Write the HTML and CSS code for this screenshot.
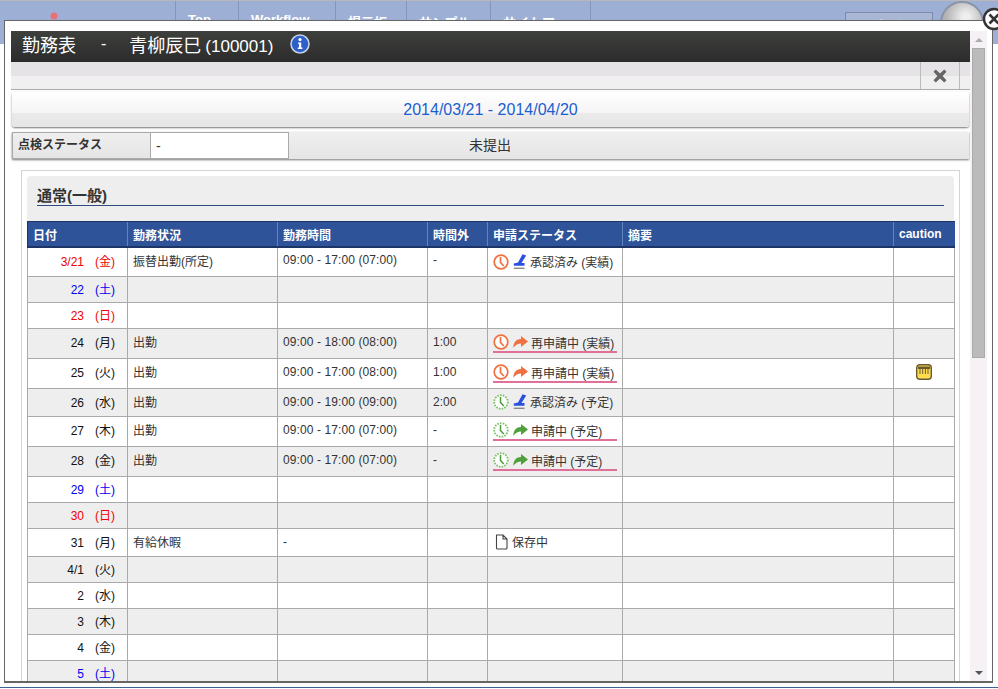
FILE: index.html
```html
<!DOCTYPE html>
<html lang="ja">

<head>
    <meta charset="UTF-8">
    <title>勤務表</title>
    <link rel="stylesheet" href="styles.css">
</head>

<body>
    <svg class="defs" width="0" height="0">
        <symbol id="clock-red" viewBox="0 0 16 16">
            <circle cx="8" cy="8" r="6.8" fill="#fff" stroke="#ef7040" stroke-width="1.7" />
            <path d="M7.5 3V8.5L10.8 12" fill="none" stroke="#ef7040" stroke-width="1.7" />
        </symbol>
        <symbol id="clock-green" viewBox="0 0 16 16">
            <circle cx="8" cy="8" r="6.8" fill="#fff" stroke="#7cc265" stroke-width="1.8" stroke-dasharray="1.6 1.2" />
            <path d="M7.5 3V8.5L10.8 12" fill="none" stroke="#4d9a3a" stroke-width="1.5" />
        </symbol>
        <symbol id="stamp" viewBox="0 0 14 16">
            <path d="M9.5 0.3L13.2 1.6L8.5 9H11.5V11.8H0.8V9.5L5 8.5Z" fill="#2a50e0" />
            <path d="M0.8 13.6H11.5V15H0.8Z" fill="#888" />
        </symbol>
        <symbol id="arrow" viewBox="0 0 15 12">
            <path d="M0.3 11.7C0.5 6 3.5 3 8 3V0L15 5.5L8 11V7.5C5 7.5 2.8 8.8 0.3 11.7Z" fill="currentColor" />
        </symbol>
        <symbol id="doc" viewBox="0 0 13 16">
            <path d="M1.5 1H8L12 5V14C12 14.6 11.6 15 11 15H2.5C1.9 15 1.5 14.6 1.5 14ZM8 1V5H12" fill="#fff" stroke="#444" stroke-width="1.1" />
        </symbol>
    </svg>

    <header class="site-header">
        <div class="logo">
            <svg width="110" height="36" viewBox="0 0 110 36">
                <circle cx="14" cy="8" r="3.5" fill="#e8707a" />
                <path d="M2 20C6 12 16 12 20 18" fill="none" stroke="#e8707a" stroke-width="4" />
                <circle cx="100" cy="15" r="2.5" fill="#b8bed0" />
            </svg>
        </div>
        <nav class="site-nav">
            <a>Top</a>
            <a>Workflow</a>
            <a>掲示板</a>
            <a>サンプル</a>
            <a>サイトマップ</a>
        </nav>
        <div class="logout">ログアウト</div>
        <div class="avatar"></div>
    </header>

    <div class="backdrop-line"></div>

    <div class="modal">
        <div class="modal-main">
            <div class="title-bar">
                <span class="title-text">勤務表</span>
                <span class="title-dash">-</span>
                <span class="title-text">青柳辰巳<span class="title-id">(100001)</span></span>
                <svg class="info-icon" width="20" height="20" viewBox="0 0 20 20">
                    <circle cx="10" cy="10" r="9" fill="#2d5fc8" stroke="#c4cfe4" stroke-width="1.6" />
                    <circle cx="10" cy="5.6" r="1.6" fill="#fff" />
                    <path d="M8 8.4H11.2V13.6H12.4V15H7.8V13.6H9V9.8H8Z" fill="#fff" />
                </svg>
            </div>
            <div class="toolbar">
                <div class="toolbar-close">
                    <svg width="14" height="14" viewBox="0 0 14 14">
                        <path d="M2.8 0.5L7 4.4L11.2 0.5L13.5 2.8L9.6 7L13.5 11.2L11.2 13.5L7 9.6L2.8 13.5L0.5 11.2L4.4 7L0.5 2.8Z" fill="#666" />
                    </svg>
                </div>
            </div>
            <div class="date-bar">2014/03/21 - 2014/04/20</div>
            <div class="status-bar">
                <div class="status-label">点検ステータス</div>
                <div class="status-value">-</div>
                <div class="status-state">未提出</div>
            </div>
            <div class="panel">
                <div class="section-head">
                    <h2>通常(一般)</h2>
                </div>
                <table class="sheet">
                    <colgroup>
                        <col class="c-date">
                        <col class="c-work">
                        <col class="c-time">
                        <col class="c-over">
                        <col class="c-apply">
                        <col class="c-note">
                        <col class="c-caution">
                    </colgroup>
                    <thead>
                        <tr>
                            <th>日付</th>
                            <th>勤務状況</th>
                            <th>勤務時間</th>
                            <th>時間外</th>
                            <th>申請ステータス</th>
                            <th>摘要</th>
                            <th>caution</th>
                        </tr>
                    </thead>
                    <tbody>
                        <tr class="h29">
                            <td class="day red"><span class="num">3/21</span><span>(金)</span></td>
                            <td>振替出勤(所定)</td>
                            <td class="time">09:00 - 17:00 (07:00)</td>
                            <td>-</td>
                            <td><span class="apply"><svg class="i-clock"><use href="#clock-red" /></svg><svg class="i-stamp"><use href="#stamp" /></svg>承認済み (実績)</span></td>
                            <td></td>
                            <td></td>
                        </tr>
                        <tr class="h26 alt">
                            <td class="day blue"><span class="num">22</span><span>(土)</span></td>
                            <td></td>
                            <td></td>
                            <td></td>
                            <td></td>
                            <td></td>
                            <td></td>
                        </tr>
                        <tr class="h26">
                            <td class="day red"><span class="num">23</span><span>(日)</span></td>
                            <td></td>
                            <td></td>
                            <td></td>
                            <td></td>
                            <td></td>
                            <td></td>
                        </tr>
                        <tr class="h30 alt">
                            <td class="day"><span class="num">24</span><span>(月)</span></td>
                            <td>出勤</td>
                            <td class="time">09:00 - 18:00 (08:00)</td>
                            <td>1:00</td>
                            <td><span class="apply pending"><svg class="i-clock"><use href="#clock-red" /></svg><svg class="i-arrow orange"><use href="#arrow" /></svg>再申請中 (実績)</span></td>
                            <td></td>
                            <td></td>
                        </tr>
                        <tr class="h30">
                            <td class="day"><span class="num">25</span><span>(火)</span></td>
                            <td>出勤</td>
                            <td class="time">09:00 - 17:00 (08:00)</td>
                            <td>1:00</td>
                            <td><span class="apply pending"><svg class="i-clock"><use href="#clock-red" /></svg><svg class="i-arrow orange"><use href="#arrow" /></svg>再申請中 (実績)</span></td>
                            <td></td>
                            <td class="caution-cell">
                                <svg width="16" height="16" viewBox="0 0 16 16">
                                    <rect x="0.7" y="0.7" width="14.6" height="14.6" rx="3" fill="#ffdc50" stroke="#6a5a30" stroke-width="1.4" />
                                    <path d="M2 2.5H14V5H2Z" fill="#6a5a30" />
                                    <path d="M4 5V10M6.7 5V10M9.4 5V10M12 5V10" stroke="#6a5a30" stroke-width="1" />
                                </svg>
                            </td>
                        </tr>
                        <tr class="h28 alt">
                            <td class="day"><span class="num">26</span><span>(水)</span></td>
                            <td>出勤</td>
                            <td class="time">09:00 - 19:00 (09:00)</td>
                            <td>2:00</td>
                            <td><span class="apply"><svg class="i-clock"><use href="#clock-green" /></svg><svg class="i-stamp"><use href="#stamp" /></svg>承認済み (予定)</span></td>
                            <td></td>
                            <td></td>
                        </tr>
                        <tr class="h30">
                            <td class="day"><span class="num">27</span><span>(木)</span></td>
                            <td>出勤</td>
                            <td class="time">09:00 - 17:00 (07:00)</td>
                            <td>-</td>
                            <td><span class="apply pending"><svg class="i-clock"><use href="#clock-green" /></svg><svg class="i-arrow green"><use href="#arrow" /></svg>申請中 (予定)</span></td>
                            <td></td>
                            <td></td>
                        </tr>
                        <tr class="h30 alt">
                            <td class="day"><span class="num">28</span><span>(金)</span></td>
                            <td>出勤</td>
                            <td class="time">09:00 - 17:00 (07:00)</td>
                            <td>-</td>
                            <td><span class="apply pending"><svg class="i-clock"><use href="#clock-green" /></svg><svg class="i-arrow green"><use href="#arrow" /></svg>申請中 (予定)</span></td>
                            <td></td>
                            <td></td>
                        </tr>
                        <tr class="h26">
                            <td class="day blue"><span class="num">29</span><span>(土)</span></td>
                            <td></td>
                            <td></td>
                            <td></td>
                            <td></td>
                            <td></td>
                            <td></td>
                        </tr>
                        <tr class="h26 alt">
                            <td class="day red"><span class="num">30</span><span>(日)</span></td>
                            <td></td>
                            <td></td>
                            <td></td>
                            <td></td>
                            <td></td>
                            <td></td>
                        </tr>
                        <tr class="h28">
                            <td class="day"><span class="num">31</span><span>(月)</span></td>
                            <td>有給休暇</td>
                            <td>-</td>
                            <td></td>
                            <td><span class="apply"><svg class="i-doc"><use href="#doc" /></svg>保存中</span></td>
                            <td></td>
                            <td></td>
                        </tr>
                        <tr class="h26 alt">
                            <td class="day"><span class="num">4/1</span><span>(火)</span></td>
                            <td></td>
                            <td></td>
                            <td></td>
                            <td></td>
                            <td></td>
                            <td></td>
                        </tr>
                        <tr class="h26">
                            <td class="day"><span class="num">2</span><span>(水)</span></td>
                            <td></td>
                            <td></td>
                            <td></td>
                            <td></td>
                            <td></td>
                            <td></td>
                        </tr>
                        <tr class="h26 alt">
                            <td class="day"><span class="num">3</span><span>(木)</span></td>
                            <td></td>
                            <td></td>
                            <td></td>
                            <td></td>
                            <td></td>
                            <td></td>
                        </tr>
                        <tr class="h26">
                            <td class="day"><span class="num">4</span><span>(金)</span></td>
                            <td></td>
                            <td></td>
                            <td></td>
                            <td></td>
                            <td></td>
                            <td></td>
                        </tr>
                        <tr class="h26 alt">
                            <td class="day blue"><span class="num">5</span><span>(土)</span></td>
                            <td></td>
                            <td></td>
                            <td></td>
                            <td></td>
                            <td></td>
                            <td></td>
                        </tr>
                    </tbody>
                </table>
            </div>
        </div>
        <div class="scrollbar">
            <span class="arrow-up"></span>
            <div class="thumb"></div>
            <span class="arrow-down"></span>
        </div>
    </div>

    <svg class="modal-close" width="24" height="24" viewBox="0 0 24 24">
        <circle cx="12" cy="12" r="10" fill="#fff" stroke="#333" stroke-width="2.4" />
        <path d="M7.5 7.5L16.5 16.5M16.5 7.5L7.5 16.5" stroke="#333" stroke-width="2.6" />
    </svg>
</body>

</html>
```

FILE: styles.css
```css
html,
body {
    margin: 0;
    padding: 0;
    height: 689px;
    overflow: hidden;
}

body {
    position: relative;
    background: #fff;
    font-family: "Liberation Sans", "Noto Sans CJK JP", sans-serif;
    font-size: 12px;
    color: #333;
}

.defs {
    position: absolute;
}

/* page behind the dialog */
.site-header {
    display: flex;
    height: 44px;
    box-sizing: border-box;
    border-top: 1px solid #b8b8b8;
    background: #9eafd5;
    position: relative;
}

.logo {
    width: 175px;
    padding: 7px 0 0 40px;
    box-sizing: border-box;
}

.site-nav {
    display: flex;
    height: 44px;
    border-left: 1px solid #8494bb;
}

.site-nav a {
    display: block;
    padding: 11px 12px 0;
    border-right: 1px solid #8494bb;
    color: #fff;
    font-size: 13px;
    font-weight: bold;
}

.site-nav a:nth-child(1) {
    width: 38px;
}

.site-nav a:nth-child(2) {
    width: 72px;
}

.site-nav a:nth-child(3) {
    width: 46px;
}

.site-nav a:nth-child(4) {
    width: 59px;
}

.site-nav a:nth-child(5) {
    width: 75px;
}

.logout {
    width: 86px;
    height: 24px;
    margin: 11px 0 0 254px;
    border: 1px solid #7f8aa8;
    background: #a9b6d4;
    color: #fff;
    text-align: center;
    line-height: 26px;
}

.avatar {
    width: 44px;
    height: 44px;
    margin: 0 0 0 7px;
    border-radius: 50%;
    background: radial-gradient(circle at 60% 35%, #eee 10%, #b5b5b5 55%, #999);
    border: 2px solid #8a93a8;
    box-sizing: border-box;
}

.backdrop-line {
    position: absolute;
    left: 0;
    top: 687px;
    width: 100%;
    height: 1px;
    background: #3b6290;
}

/* dialog */
.modal {
    position: absolute;
    left: 4px;
    top: 20px;
    width: 989px;
    height: 663px;
    box-sizing: border-box;
    display: flex;
    padding: 10px 5px 0 6px;
    background: #fff;
    border: 1px solid #666;
    border-bottom-width: 2px;
    overflow: hidden;
}

.modal-main {
    width: 959px;
    flex: none;
}

.modal-close {
    position: absolute;
    left: 982px;
    top: 7px;
}

.title-bar {
    display: flex;
    align-items: center;
    height: 31px;
    box-sizing: border-box;
    padding: 0 0 6px 11px;
    background: linear-gradient(#3e403d, #2b2b2b);
    color: #fff;
    font-size: 18px;
}

.title-id {
    margin-left: 4px;
    font-size: 17px;
}

.title-dash {
    margin: 0 23px 0 25px;
    font-size: 16px;
}

.info-icon {
    margin-left: 17px;
}

.toolbar {
    display: flex;
    justify-content: flex-end;
    height: 28px;
    box-sizing: border-box;
    padding-right: 10px;
    background: linear-gradient(#e5e3e5 50%, #f1f0f1 50%);
    border-bottom: 1px solid #aaa;
}

.toolbar-close {
    display: flex;
    align-items: center;
    justify-content: center;
    width: 38px;
    border: 1px solid #bbb;
    border-width: 0 1px;
}

.date-bar {
    height: 35px;
    margin: 2px 1px 0;
    border-radius: 3px;
    background: linear-gradient(#fff, #f6f4f6 60%, #ebeaeb 60%, #e6e6e6);
    box-shadow: 0 1px 2px #777;
    color: #1a5fd0;
    font-size: 16px;
    line-height: 35px;
    text-align: center;
}

.status-bar {
    display: flex;
    height: 27px;
    margin: 5px 1px 0;
    background: linear-gradient(#f0eff0, #e6e5e6);
    box-shadow: 0 1px 2px #777;
}

.status-label {
    width: 138px;
    box-sizing: border-box;
    padding-left: 5px;
    border: 1px solid #aaa;
    border-right: 0;
    font-weight: bold;
    line-height: 24px;
}

.status-value {
    width: 139px;
    box-sizing: border-box;
    padding-left: 5px;
    border: 1px solid #aaa;
    background: #fff;
    font-size: 14px;
    line-height: 26px;
}

.status-state {
    width: 402px;
    text-align: center;
    font-size: 14px;
    line-height: 26px;
}

.panel {
    margin: 11px 0 0 10px;
    padding: 5px 5px 0 5px;
    width: 927px;
    height: 520px;
    border: 1px solid #d4d4d4;
    border-bottom: 0;
    overflow: hidden;
}

.section-head {
    height: 45px;
    box-sizing: border-box;
    padding: 11px 10px 0;
    background: #eee;
    border-radius: 4px 4px 0 0;
}

.section-head h2 {
    margin: 0;
    height: 18px;
    border-bottom: 1px solid #2f4a80;
    color: #333;
    font-size: 15px;
    line-height: 18px;
}

/* timesheet table */
.sheet {
    width: 927px;
    table-layout: fixed;
    border-collapse: collapse;
    color: #333;
}

.c-date {
    width: 100px;
}

.c-work,
.c-time {
    width: 150px;
}

.c-over {
    width: 60px;
}

.c-apply {
    width: 135px;
}

.c-note {
    width: 271px;
}

.c-caution {
    width: 61px;
}

.sheet th {
    height: 24px;
    padding: 0 0 0 5px;
    background: #2f5399;
    border-top: 1px solid #1d3566;
    border-bottom: 2px solid #1d3566;
    border-left: 1px solid #5f84c0;
    color: #fff;
    font-size: 12px;
    text-align: left;
}

.sheet th:first-child {
    border-left-color: #1d3566;
}

.sheet td {
    padding: 0 0 2px 5px;
    border: 1px solid #aaa;
    font-size: 12px;
    white-space: nowrap;
}

.sheet td.time {
    letter-spacing: 0.1px;
}

.sheet tr.alt td {
    background: #eee;
}

.h26 td {
    height: 23px;
}

.h28 td {
    height: 25px;
}

.sheet .h29 td {
    height: 24px;
    padding-bottom: 4px;
}

.sheet .h30 td {
    height: 25px;
    padding-bottom: 4px;
}

.day {
    color: #111;
}

.day .num {
    display: inline-block;
    width: 51px;
    margin-right: 11px;
    text-align: right;
}

.day.red {
    color: #f00000;
}

.day.blue {
    color: #0000f0;
}

.apply {
    display: inline-flex;
    align-items: center;
    height: 20px;
    vertical-align: middle;
}

.h29 .apply {
    margin-top: 3px;
}

.apply.pending {
    width: 124px;
    height: 17px;
    margin-top: 2px;
    padding-top: 1px;
    border-bottom: 2px solid #e0709a;
}

.i-clock {
    width: 16px;
    height: 16px;
    margin-right: 4px;
}

.i-stamp {
    width: 14px;
    height: 16px;
    margin-right: 3px;
}

.i-arrow {
    width: 15px;
    height: 12px;
    margin-right: 3px;
}

.i-arrow.orange {
    color: #ef7040;
}

.i-arrow.green {
    color: #4fa03a;
}

.i-doc {
    width: 13px;
    height: 16px;
    margin: 0 4px 0 2px;
}

.caution-cell svg {
    display: block;
    margin: 0 auto;
    transform: translateX(-3px);
}

/* hand-drawn scrollbar */
.scrollbar {
    position: relative;
    flex: none;
    width: 17px;
    margin-left: 0;
    background: #f5f1f5;
}

.thumb {
    width: 13px;
    height: 310px;
    box-sizing: border-box;
    margin: 17px 0 0 2px;
    background: #bbb;
    border: 1px solid #aaa;
}

.arrow-up,
.arrow-down {
    position: absolute;
    left: 5px;
    width: 0;
    height: 0;
    border-left: 4px solid transparent;
    border-right: 4px solid transparent;
}

.arrow-up {
    top: 7px;
    border-bottom: 4px solid #aaa;
}

.arrow-down {
    bottom: 6px;
    border-top: 4px solid #555;
}
```
